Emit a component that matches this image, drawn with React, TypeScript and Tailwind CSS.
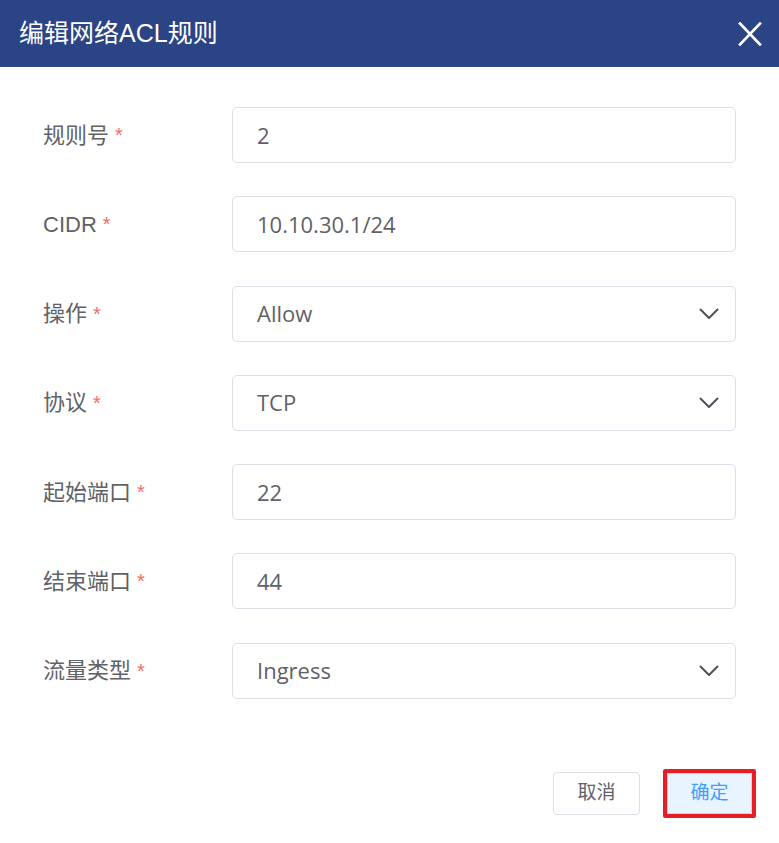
import React from "react";

const labelFont = { fontFamily: '"Liberation Sans", "Noto Sans CJK SC", sans-serif' };
const valueFont = { fontFamily: '"Open Sans", "Noto Sans CJK SC", sans-serif' };

type Row = { label: string; value: string; select?: boolean };

const rows: Row[] = [
  { label: "规则号", value: "2" },
  { label: "CIDR", value: "10.10.30.1/24" },
  { label: "操作", value: "Allow", select: true },
  { label: "协议", value: "TCP", select: true },
  { label: "起始端口", value: "22" },
  { label: "结束端口", value: "44" },
  { label: "流量类型", value: "Ingress", select: true },
];

function Chevron() {
  return (
    <svg width="20" height="12" viewBox="0 0 20 12" fill="none" className="shrink-0">
      <path d="M1.5 1.5 L10 10 L18.5 1.5" stroke="#4e5158" strokeWidth="2" strokeLinecap="round" strokeLinejoin="round" />
    </svg>
  );
}

export default function App() {
  return (
    <div className="w-[779px] h-[843px] bg-white overflow-hidden">
      <div className="h-[67px] bg-[#2b4486] flex items-center justify-between pl-[19px] pr-[17px]">
        <div className="text-white text-[25px] leading-none" style={labelFont}>
          编辑网络ACL规则
        </div>
        <svg width="24" height="24" viewBox="0 0 24 24" fill="none">
          <path d="M2 1.5 L22 22.5 M22 1.5 L2 22.5" stroke="white" strokeWidth="2.6" strokeLinecap="square" />
        </svg>
      </div>

      <div className="pt-[40px] pl-[43px] pr-[43px] flex flex-col gap-[33.3px]">
        {rows.map((r) => (
          <div key={r.label} className="flex items-center h-[56px]">
            <div className="w-[189px] text-[22px] text-[#606266] flex items-center" style={labelFont}>
              <span>{r.label}</span>
              <span className="text-[#f56c6c] ml-[6px] text-[20px]">*</span>
            </div>
            <div className="flex-1 h-[56px] border border-[#dcdfe6] rounded-[5px] flex items-center justify-between pl-[24px] pr-[16px]">
              <span className="text-[22px] text-[#606266]" style={valueFont}>
                {r.value}
              </span>
              {r.select && <Chevron />}
            </div>
          </div>
        ))}
      </div>

      <div className="flex justify-end items-center gap-[23px] pr-[23px] mt-[70px]">
        <button
          className="w-[87px] h-[43px] border border-[#dcdfe6] rounded-[4px] bg-white text-[#606266] text-[19px] flex items-center justify-center"
          style={labelFont}
        >
          取消
        </button>
        <div className="border-[4px] border-[#e81e27] rounded-[2px]">
          <button
            className="w-[85px] h-[41px] border border-[#b3d8ff] rounded-[1px] bg-[#e8f4ff] text-[#409eff] text-[19px] flex items-center justify-center"
            style={labelFont}
          >
            确定
          </button>
        </div>
      </div>
    </div>
  );
}
